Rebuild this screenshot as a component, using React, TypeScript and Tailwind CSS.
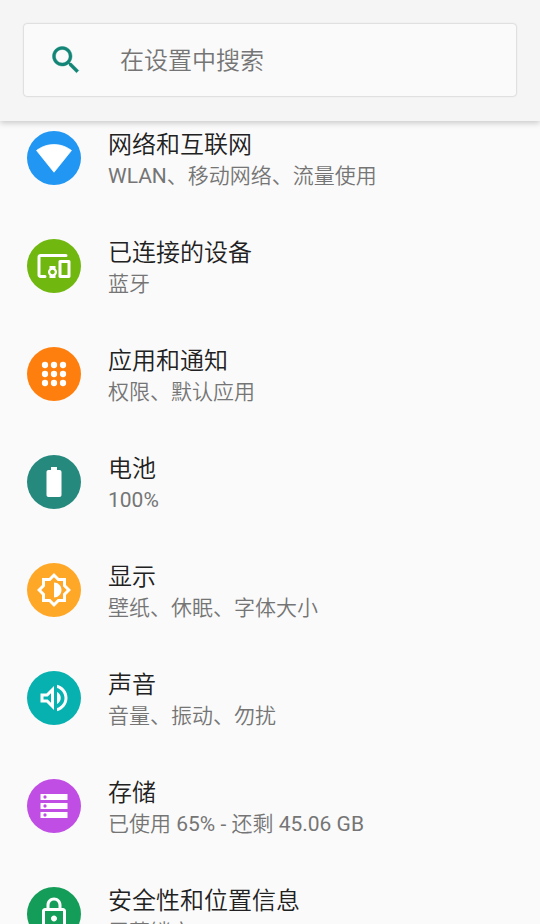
import type { ReactNode } from "react";

type Item = {
  title: string;
  summary: string;
  color: string;
  icon: ReactNode;
};

const items: Item[] = [
  {
    title: "网络和互联网",
    summary: "WLAN、移动网络、流量使用",
    color: "bg-[#2196f3]",
    icon: (
      <path
        className="stroke-white stroke-[0.5]"
        strokeLinejoin="round"
        d="M12.01 21.49L23.64 7c-.45-.34-4.93-4-11.64-4C5.28 3 .81 6.66.36 7l11.63 14.49.01.01.01-.01z"
      />
    ),
  },
  {
    title: "已连接的设备",
    summary: "蓝牙",
    color: "bg-[#70b70f]",
    icon: (
      <path d="M3 6h17a1 1 0 0 0 0-2H3c-1.1 0-2 .9-2 2v12c0 1.1.9 2 2 2h3a1 1 0 0 0 0-2H3V6zm10 6H9v1.78c-.61.55-1 1.33-1 2.22s.39 1.67 1 2.22V20h4v-1.78c.61-.55 1-1.34 1-2.22s-.39-1.67-1-2.22V12zm-2 5.5c-.83 0-1.5-.67-1.5-1.5s.67-1.5 1.5-1.5 1.5.67 1.5 1.5-.67 1.5-1.5 1.5zM22 8h-6c-.5 0-1 .5-1 1v10c0 .5.5 1 1 1h6c.5 0 1-.5 1-1V9c0-.5-.5-1-1-1zm-1 10h-4v-8h4v8z" />
    ),
  },
  {
    title: "应用和通知",
    summary: "权限、默认应用",
    color: "bg-[#ff7f0e]",
    icon: [6, 12, 18].map((cy) =>
      [6, 12, 18].map((cx) => <circle key={`${cx}-${cy}`} cx={cx} cy={cy} r="2.1" />)
    ),
  },
  {
    title: "电池",
    summary: "100%",
    color: "bg-[#26897e]",
    icon: (
      <path d="M15.67 4H14V2h-4v2H8.33C7.6 4 7 4.6 7 5.33v15.33C7 21.4 7.6 22 8.33 22h7.33c.74 0 1.34-.6 1.34-1.33V5.33C17 4.6 16.4 4 15.67 4z" />
    ),
  },
  {
    title: "显示",
    summary: "壁纸、休眠、字体大小",
    color: "bg-[#ffa726]",
    icon: (
      <path d="M20 8.69V4h-4.69L12 .69 8.69 4H4v4.69L.69 12 4 15.31V20h4.69L12 23.31 15.31 20H20v-4.69L23.31 12 20 8.69zm-2 5.79V18h-3.52L12 20.48 9.52 18H6v-3.52L3.52 12 6 9.52V6h3.52L12 3.52 14.48 6H18v3.52L20.48 12 18 14.48zM12 7v10c2.76 0 5-2.24 5-5s-2.24-5-5-5z" />
    ),
  },
  {
    title: "声音",
    summary: "音量、振动、勿扰",
    color: "bg-[#06b1b0]",
    icon: (
      <path d="M3 9v6h4l5 5V4L7 9H3zm7-.17v6.34L7.83 13H5v-2h2.83L10 8.83zM16.5 12A4.5 4.5 0 0 0 14 7.97v8.05c1.48-.73 2.5-2.25 2.5-4.02zM14 3.23v2.06c2.89.86 5 3.54 5 6.71s-2.11 5.85-5 6.71v2.06c4.01-.91 7-4.49 7-8.77s-2.99-7.86-7-8.77z" />
    ),
  },
  {
    title: "存储",
    summary: "已使用 65% - 还剩 45.06 GB",
    color: "bg-[#c04de4]",
    icon: (
      <path
        fillRule="evenodd"
        d="M3 4h18v4H3zM4.9 6a1.1 1.1 0 1 0 2.2 0a1.1 1.1 0 1 0-2.2 0zM3 10h18v4H3zM4.9 12a1.1 1.1 0 1 0 2.2 0a1.1 1.1 0 1 0-2.2 0zM3 16h18v4H3zM4.9 18a1.1 1.1 0 1 0 2.2 0a1.1 1.1 0 1 0-2.2 0z"
      />
    ),
  },
  {
    title: "安全性和位置信息",
    summary: "屏幕锁定",
    color: "bg-[#149d58]",
    icon: (
      <path d="M18 8h-1V6c0-2.76-2.24-5-5-5S7 3.24 7 6v2H6c-1.1 0-2 .9-2 2v10c0 1.1.9 2 2 2h12c1.1 0 2-.9 2-2V10c0-1.1-.9-2-2-2zM9 6c0-1.66 1.34-3 3-3s3 1.34 3 3v2H9V6zm9 14H6V10h12v10zm-6-3c1.1 0 2-.9 2-2s-.9-2-2-2-2 .9-2 2 .9 2 2 2z" />
    ),
  },
];

// Latin runs and digits are set one step heavier than the Chinese text
function Summary({ text }: { text: string }) {
  return (
    <p className="text-[21px] leading-[30px] font-[350] text-[#757575]">
      {text.split(/([\x20-\x7e]+)/).map((part, i) =>
        i % 2 ? (
          <span key={i} className="font-normal">
            {part}
          </span>
        ) : (
          part
        )
      )}
    </p>
  );
}

function SearchBar() {
  return (
    <header className="z-10 h-[121px] shrink-0 bg-[#f5f5f5] p-6 shadow-[0_2px_6px_rgba(0,0,0,0.2)]">
      <button className="flex h-[72px] w-full items-center rounded-[3px] bg-[#fafafa] pl-6 text-left shadow-[0_0_2px_rgba(0,0,0,0.32)]">
        <svg viewBox="0 0 24 24" className="h-9 w-9 fill-[#128576] stroke-[#128576] stroke-[0.3]">
          <path d="M15.5 14h-.79l-.28-.27C15.41 12.59 16 11.11 16 9.5 16 5.91 13.09 3 9.5 3S3 5.91 3 9.5 5.91 16 9.5 16c1.61 0 3.09-.59 4.23-1.57l.27.28v.79l5 4.99L20.49 19l-4.99-5zm-6 0C7.01 14 5 11.99 5 9.5S7.01 5 9.5 5 14 7.01 14 9.5 11.99 14 9.5 14z" />
        </svg>
        <span className="ml-9 pt-0.5 text-2xl font-[350] text-[#757575]">在设置中搜索</span>
      </button>
    </header>
  );
}

function SettingsRow({ title, summary, color, icon }: Item) {
  return (
    <li className="flex h-[108px] shrink-0 items-center pl-[27px]">
      <div className={`grid h-[54px] w-[54px] place-items-center rounded-full ${color}`}>
        <svg viewBox="0 0 24 24" className="h-9 w-9 overflow-visible fill-white">
          {icon}
        </svg>
      </div>
      <div className="ml-[27px] pt-1 whitespace-nowrap">
        <h2 className="text-2xl leading-8 font-[350] text-[#212121]">{title}</h2>
        <Summary text={summary} />
      </div>
    </li>
  );
}

export default function App() {
  return (
    <div className="flex h-[924px] w-[540px] flex-col overflow-hidden bg-[#fafafa] font-[Roboto,'Noto_Sans_CJK_SC',sans-serif]">
      <SearchBar />
      <ul className="-mt-[17px] flex flex-col">
        {items.map((item) => (
          <SettingsRow key={item.title} {...item} />
        ))}
      </ul>
    </div>
  );
}
